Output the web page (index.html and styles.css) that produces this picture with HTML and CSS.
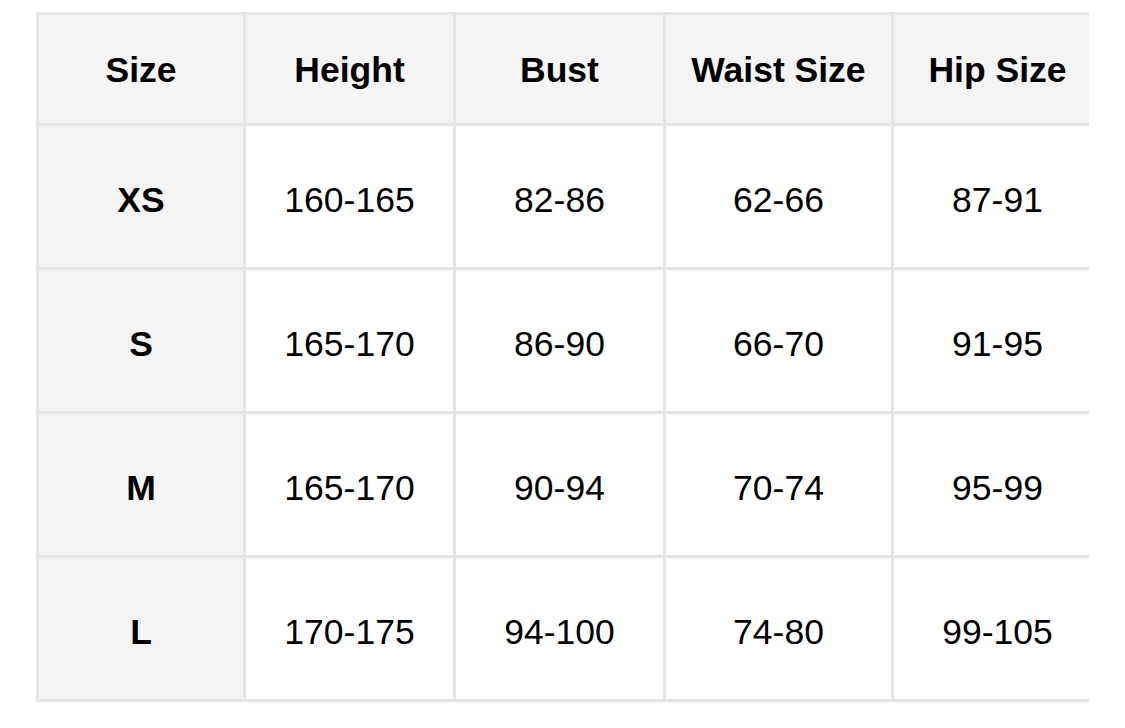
FILE: index.html
```html
<!DOCTYPE html>
<html>
<head>
<meta charset="utf-8">
<link rel="stylesheet" href="styles.css">
</head>
<body>
<div class="frame">
  <div class="clip">
    <div class="chart">
      <div class="cell head">Size</div>
      <div class="cell head">Height</div>
      <div class="cell head">Bust</div>
      <div class="cell head">Waist Size</div>
      <div class="cell head">Hip Size</div>

      <div class="cell side">XS</div>
      <div class="cell">160-165</div>
      <div class="cell">82-86</div>
      <div class="cell">62-66</div>
      <div class="cell">87-91</div>

      <div class="cell side">S</div>
      <div class="cell">165-170</div>
      <div class="cell">86-90</div>
      <div class="cell">66-70</div>
      <div class="cell">91-95</div>

      <div class="cell side">M</div>
      <div class="cell">165-170</div>
      <div class="cell">90-94</div>
      <div class="cell">70-74</div>
      <div class="cell">95-99</div>

      <div class="cell side">L</div>
      <div class="cell">170-175</div>
      <div class="cell">94-100</div>
      <div class="cell">74-80</div>
      <div class="cell">99-105</div>
    </div>
  </div>
</div>
</body>
</html>
```
FILE: styles.css
```css
html, body {
  margin: 0;
  padding: 0;
  background: #ffffff;
}
body {
  font-family: "Liberation Sans", Arial, Helvetica, sans-serif;
  color: #000;
}
.frame {
  padding: 12px 0 0 36px;
}
.clip {
  width: 1053px;
  overflow: hidden;
}
.chart {
  display: grid;
  grid-template-columns: 204px 207px 207px 225px 207px;
  grid-template-rows: 108px repeat(4, 141px);
  gap: 3px;
  padding: 3px;
  background: #e5e5e5;
  width: max-content;
}
.cell {
  background: #ffffff;
  display: flex;
  align-items: center;
  justify-content: center;
  box-sizing: border-box;
  padding-top: 8px;
  font-size: 35.5px;
  white-space: nowrap;
}
.head,
.side {
  background: #f4f4f4;
  font-weight: bold;
}
.head {
  padding-top: 3px;
}
```
